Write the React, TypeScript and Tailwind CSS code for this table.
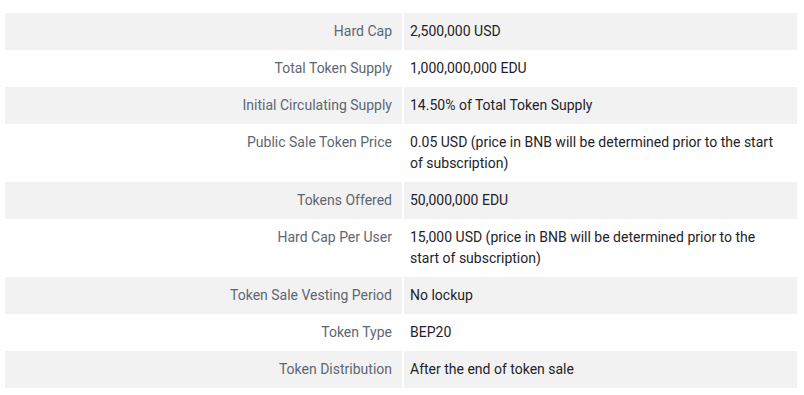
import React from "react";

const rows: { label: string; value: string; gray: boolean }[] = [
  { label: "Hard Cap", value: "2,500,000 USD", gray: true },
  { label: "Total Token Supply", value: "1,000,000,000 EDU", gray: false },
  { label: "Initial Circulating Supply", value: "14.50% of Total Token Supply", gray: true },
  {
    label: "Public Sale Token Price",
    value: "0.05 USD (price in BNB will be determined prior to the start of subscription)",
    gray: false,
  },
  { label: "Tokens Offered", value: "50,000,000 EDU", gray: true },
  {
    label: "Hard Cap Per User",
    value: "15,000 USD (price in BNB will be determined prior to the start of subscription)",
    gray: false,
  },
  { label: "Token Sale Vesting Period", value: "No lockup", gray: true },
  { label: "Token Type", value: "BEP20", gray: false },
  { label: "Token Distribution", value: "After the end of token sale", gray: true },
];

export default function App() {
  return (
    <div
      className="w-[804px] h-[395px] bg-white pl-[5px] pt-[13px]"
      style={{ fontFamily: '"Roboto", "Noto Sans", sans-serif' }}
    >
      <div className="flex w-[792px] flex-col text-[14px] leading-[21px]">
        {rows.map((r) => (
          <div key={r.label} className="flex gap-[2px]">
            <div
              className={`w-[397px] shrink-0 py-[8px] pr-[10px] text-right text-[#5e6673] ${
                r.gray ? "bg-[#f2f2f2]" : "bg-white"
              }`}
            >
              {r.label}
            </div>
            <div
              className={`flex-1 py-[8px] pl-[6px] pr-[10px] text-[#1e2329] ${
                r.gray ? "bg-[#f2f2f2]" : "bg-white"
              }`}
            >
              {r.value}
            </div>
          </div>
        ))}
      </div>
    </div>
  );
}
